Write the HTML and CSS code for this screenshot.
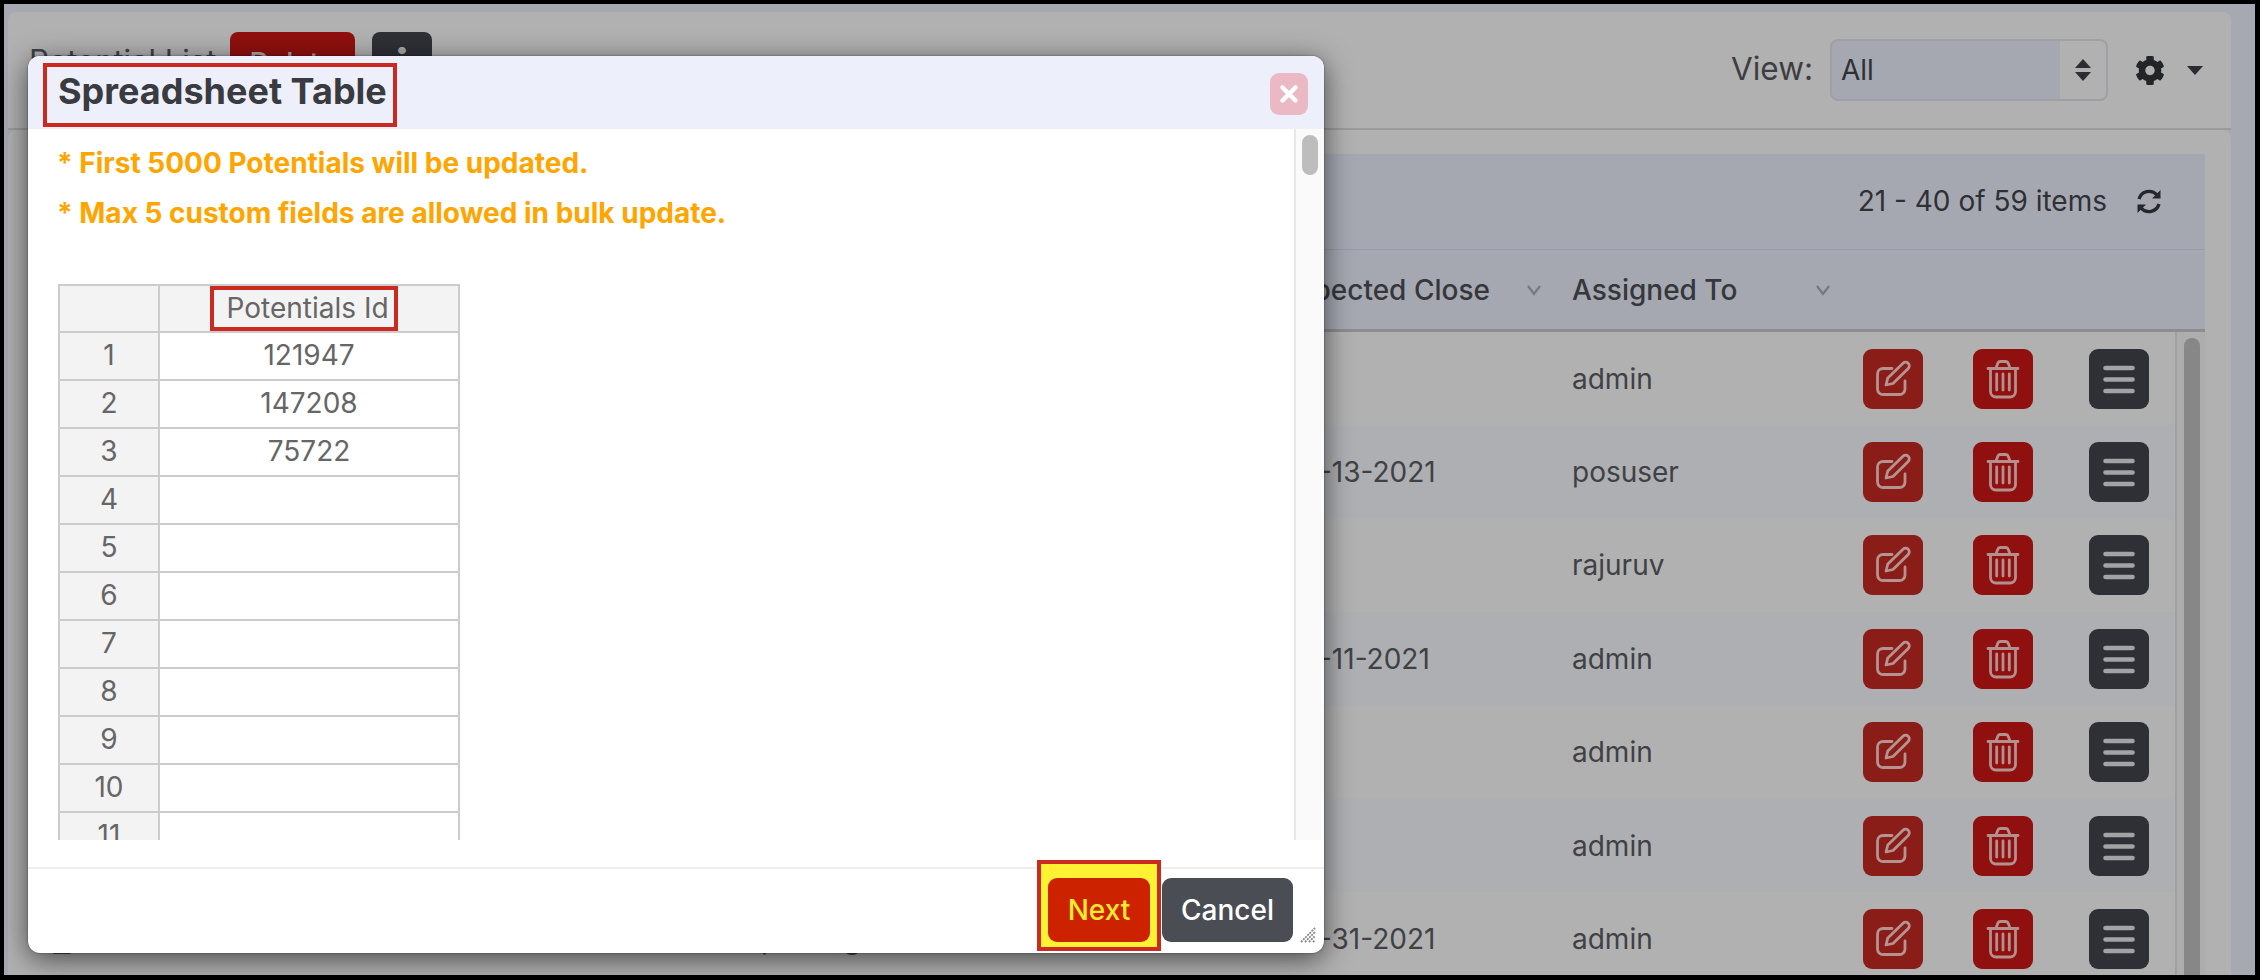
FILE: index.html
```html
<!DOCTYPE html>
<html lang="en">
<head>
<meta charset="utf-8">
<title>Spreadsheet Table</title>
<link rel="stylesheet" href="styles.css">
</head>
<body>
<svg class="defs" width="0" height="0" aria-hidden="true">
  <symbol id="i-edit" viewBox="0 0 60 60"><path d="M29 19.500H20a5.500 5.500 0 0 0-5.500 5.500v15a5.500 5.500 0 0 0 5.500 5.500h16.500a5.500 5.500 0 0 0 5.500-5.500V32" fill="none" stroke="currentColor" stroke-width="2.800" stroke-linecap="round"/><path d="M23 36l1.800-7L40 14.200a3.600 3.600 0 0 1 5.200 5.200L30 34.500z" fill="none" stroke="currentColor" stroke-width="2.800" stroke-linejoin="round"/></symbol>
  <symbol id="i-trash" viewBox="0 0 60 60"><path d="M15 19.500H45M23 19l1.800-4.800a2.500 2.500 0 0 1 2.300-1.700h5.800a2.500 2.500 0 0 1 2.300 1.700L37 19M17.500 20v22.500a5.500 5.500 0 0 0 5.500 5.500h14a5.500 5.500 0 0 0 5.500-5.500V20M23.700 25V41M30 25V41M36.300 25V41" fill="none" stroke="currentColor" stroke-width="2.800" stroke-linecap="round" stroke-linejoin="round"/></symbol>
  <symbol id="i-menu" viewBox="0 0 60 60"><path d="M16.500 19H43.500M16.500 30.500H43.500M16.500 42H43.500" fill="none" stroke="currentColor" stroke-width="4.600" stroke-linecap="round"/></symbol>
  <symbol id="i-chev" viewBox="0 0 16 12"><path d="M2 2l6 8 6-8" fill="none" stroke="currentColor" stroke-width="2.200"/></symbol>
</svg>

<div class="frame">
  <header class="topbar">
    <div class="top-left">
      <span class="page-title">Potential List</span>
      <button class="top-btn top-delete">Delete</button>
      <button class="top-btn top-info">i</button>
    </div>
    <div class="top-right">
      <span class="view-label">View:</span>
      <div class="view-select">
        <span class="view-value">All</span>
        <span class="view-arrows"><i class="up"></i><i class="down"></i></span>
      </div>
      <svg class="gear" viewBox="0 0 512 512"><path d="M487.400 315.700l-42.600-24.600c4.300-23.200 4.300-47 0-70.200l42.600-24.600c4.900-2.800 7.100-8.600 5.500-14-11.100-35.600-30-67.800-54.700-94.600-3.800-4.100-10-5.100-14.800-2.300L380.800 110c-17.900-15.400-38.500-27.300-60.800-35.100V25.800c0-5.600-3.900-10.500-9.400-11.700-36.700-8.200-74.300-7.800-109.200 0-5.500 1.200-9.400 6.100-9.400 11.700V75c-22.200 7.900-42.800 19.800-60.800 35.100L88.700 85.500c-4.900-2.800-11-1.900-14.800 2.300-24.700 26.700-43.600 58.900-54.700 94.600-1.700 5.400.6 11.200 5.500 14L67.300 221c-4.300 23.200-4.300 47 0 70.200l-42.600 24.600c-4.900 2.800-7.100 8.600-5.500 14 11.100 35.600 30 67.800 54.700 94.600 3.800 4.100 10 5.100 14.800 2.300l42.600-24.600c17.900 15.400 38.500 27.300 60.800 35.100v49.200c0 5.600 3.900 10.500 9.400 11.700 36.700 8.200 74.300 7.800 109.200 0 5.500-1.200 9.400-6.100 9.400-11.700v-49.200c22.200-7.900 42.800-19.800 60.800-35.100l42.600 24.600c4.900 2.800 11 1.900 14.800-2.300 24.700-26.700 43.600-58.900 54.700-94.600 1.500-5.500-.7-11.300-5.600-14.100zM256 336c-44.100 0-80-35.900-80-80s35.900-80 80-80 80 35.900 80 80-35.900 80-80 80z" fill="currentColor"/></svg>
      <i class="caret"></i>
    </div>
  </header>

  <main class="listcard">
    <div class="band">
      <span class="count">21 - 40 of 59 items</span>
      <svg class="refresh" viewBox="0 0 28 28"><path d="M4 11.500A10.500 10.500 0 0 1 22 7.500M24 16.500A10.500 10.500 0 0 1 6 20.500" fill="none" stroke="currentColor" stroke-width="3.400"/><path d="M25.500 2.500V11h-8.500zM2.500 25.500V17h8.500z" fill="currentColor"/></svg>
    </div>
    <div class="thead">
      <div class="th th-close">Expected Close<svg class="chev"><use href="#i-chev"/></svg></div>
      <div class="th th-assign">Assigned To<svg class="chev"><use href="#i-chev"/></svg></div>
    </div>
    <div class="tbody-wrap">
      <div class="rows">
        <div class="row"><span class="check"></span><span></span><span></span><span>admin</span><button class="act act-edit"><svg><use href="#i-edit"/></svg></button><button class="act act-del"><svg><use href="#i-trash"/></svg></button><button class="act act-menu"><svg><use href="#i-menu"/></svg></button></div>
        <div class="row alt"><span class="check"></span><span></span><span>08-13-2021</span><span>posuser</span><button class="act act-edit"><svg><use href="#i-edit"/></svg></button><button class="act act-del"><svg><use href="#i-trash"/></svg></button><button class="act act-menu"><svg><use href="#i-menu"/></svg></button></div>
        <div class="row"><span class="check"></span><span></span><span></span><span>rajuruv</span><button class="act act-edit"><svg><use href="#i-edit"/></svg></button><button class="act act-del"><svg><use href="#i-trash"/></svg></button><button class="act act-menu"><svg><use href="#i-menu"/></svg></button></div>
        <div class="row alt"><span class="check"></span><span></span><span>08-11-2021</span><span>admin</span><button class="act act-edit"><svg><use href="#i-edit"/></svg></button><button class="act act-del"><svg><use href="#i-trash"/></svg></button><button class="act act-menu"><svg><use href="#i-menu"/></svg></button></div>
        <div class="row"><span class="check"></span><span></span><span></span><span>admin</span><button class="act act-edit"><svg><use href="#i-edit"/></svg></button><button class="act act-del"><svg><use href="#i-trash"/></svg></button><button class="act act-menu"><svg><use href="#i-menu"/></svg></button></div>
        <div class="row alt"><span class="check"></span><span></span><span></span><span>admin</span><button class="act act-edit"><svg><use href="#i-edit"/></svg></button><button class="act act-del"><svg><use href="#i-trash"/></svg></button><button class="act act-menu"><svg><use href="#i-menu"/></svg></button></div>
        <div class="row"><span class="check"></span><span class="name">parking</span><span>03-31-2021</span><span>admin</span><button class="act act-edit"><svg><use href="#i-edit"/></svg></button><button class="act act-del"><svg><use href="#i-trash"/></svg></button><button class="act act-menu"><svg><use href="#i-menu"/></svg></button></div>
      </div>
      <div class="list-scroll"><div class="list-thumb"></div></div>
    </div>
  </main>
</div>

<section class="modal">
  <div class="modal-head">
    <h1 class="modal-title">Spreadsheet Table</h1>
    <button class="modal-close" aria-label="Close"><svg viewBox="0 0 38 42"><path d="M12.500 14.500L25.500 27.500M25.500 14.500L12.500 27.500" fill="none" stroke="#fff" stroke-width="4.500" stroke-linecap="round"/></svg></button>
  </div>
  <div class="modal-body">
    <div class="modal-content">
      <p class="warn">* First 5000 Potentials will be updated.</p>
      <p class="warn">* Max 5 custom fields are allowed in bulk update.</p>
      <table class="sheet">
        <thead><tr><th class="corner"></th><th class="col"><span class="mark">Potentials Id</span></th></tr></thead>
        <tbody>
          <tr><th>1</th><td>121947</td></tr>
          <tr><th>2</th><td>147208</td></tr>
          <tr><th>3</th><td>75722</td></tr>
          <tr><th>4</th><td></td></tr>
          <tr><th>5</th><td></td></tr>
          <tr><th>6</th><td></td></tr>
          <tr><th>7</th><td></td></tr>
          <tr><th>8</th><td></td></tr>
          <tr><th>9</th><td></td></tr>
          <tr><th>10</th><td></td></tr>
          <tr><th>11</th><td></td></tr>
        </tbody>
      </table>
    </div>
    <div class="modal-scroll"><div class="modal-thumb"></div></div>
  </div>
  <div class="modal-foot">
    <div class="next-mark"><button class="btn btn-next">Next</button></div>
    <button class="btn btn-cancel">Cancel</button>
  </div>
  <svg class="grip" viewBox="0 0 16 16"><path d="M1 15L15 1M5 15L15 5M9 15L15 9M13 15L15 13" stroke="#8a8a8a" stroke-width="1.800" stroke-dasharray="2 1" fill="none"/></svg>
</section>
</body>
</html>
```
FILE: styles.css
```css
* { box-sizing: border-box; }
html, body { margin: 0; height: 100%; }
body {
  background: #000;
  padding: 4px 5px 5px 4px;
  font-family: Inter, "Liberation Sans", sans-serif;
  font-size: 28px;
  color: #3d3e41;
  overflow: hidden;
  position: relative;
}
.defs { position: absolute; }
button { font-family: inherit; border: 0; padding: 0; }

.frame {
  height: 971px;
  background: #a6a9b2;
  padding: 8px 24px 0 4px;
  overflow: hidden;
}

.topbar {
  height: 118px;
  background: #b1b1b1;
  border-bottom: 2px solid #9b9b9c;
  border-radius: 8px 8px 0 0;
  display: flex;
  align-items: center;
  justify-content: space-between;
  padding: 0 28px 0 21px;
}
.top-left { display: flex; align-items: center; margin-bottom: 10px; }
.page-title { font-size: 31px; width: 201px; color: #404145; margin-bottom: 10px; white-space: nowrap; }
.top-btn { height: 66px; border-radius: 8px; color: #a9a9a9; font-size: 28px; font-weight: 500; }
.top-delete { width: 125px; background: #8f100e; margin-right: 17px; padding-bottom: 4px; }
.top-info { width: 60px; background: #2e3036; font-weight: 800; font-size: 44px; padding-bottom: 2px; line-height: 66px; }
.top-right { display: flex; align-items: center; color: #3d3e41; }
.view-label { font-size: 31.500px; margin-right: 17px; margin-bottom: 3px; }
.view-select {
  width: 278px;
  height: 62px;
  display: flex;
  background: #a5a8b1;
  border: 2px solid #9f9fa4;
  border-radius: 8px;
  overflow: hidden;
}
.view-value { flex: 1; align-self: center; padding-left: 9px; font-size: 28px; color: #2f3034; }
.view-arrows {
  width: 46px;
  background: #b1b1b1;
  display: flex;
  flex-direction: column;
  align-items: center;
  justify-content: center;
  gap: 4px;
}
.view-arrows i { width: 0; height: 0; border-left: 8px solid transparent; border-right: 8px solid transparent; }
.view-arrows .up { border-bottom: 9px solid #2d2e33; }
.view-arrows .down { border-top: 9px solid #2d2e33; }
.gear { width: 30px; height: 31px; margin-left: 27px; color: #232428; }
.caret {
  width: 0; height: 0;
  margin-left: 22px;
  border-left: 8px solid transparent;
  border-right: 8px solid transparent;
  border-top: 9px solid #2a2b30;
}

.listcard {
  height: 845px;
  background: #b1b1b1;
  border-radius: 8px 8px 0 0;
  padding: 24px 26px 0 21px;
}
.band {
  height: 96px;
  background: #a5a8b1;
  border-bottom: 1px solid #979bb0;
  display: flex;
  align-items: center;
  justify-content: flex-end;
  padding-right: 42px;
  font-size: 28px;
  color: #2f3034;
}
.count { margin-bottom: 2px; }
.refresh { width: 28px; height: 29px; margin-left: 28px; color: #26272b; }
.thead {
  height: 82px;
  background: #a5a8b1;
  border-bottom: 3px solid #8c8d91;
  display: flex;
  align-items: center;
  padding-left: 1252px;
  font-weight: 500;
  color: #36373b;
}
.th { display: flex; align-items: center; }
.th-close { width: 291px; padding-right: 30px; justify-content: space-between; }
.th-assign { width: 291px; padding-right: 32px; justify-content: space-between; }
.chev { width: 16px; height: 12px; color: #77787c; flex: none; }

.tbody-wrap { display: flex; height: 700px; }
.rows { flex: 1; border-right: 2px solid #a0a0a1; }
.row {
  height: 93.400px;
  display: grid;
  grid-template-columns: 43px 1212px 288px 291px 110px 116px 60px;
  align-items: center;
  background: #b1b1b1;
  color: #404145;
}
.row.alt { background: #aeafb2; }
.check { justify-self: end; width: 20px; height: 30px; background: #a9aab0; border: 2px solid #4a4a4d; border-radius: 3px; }
.name { padding-left: 689px; }
.act { width: 60px; height: 60px; border-radius: 9px; display: flex; }
.act svg { width: 60px; height: 60px; }
.act-edit { background: #8a1d17; color: #b59391; }
.act-del { background: #8f100e; color: #b3908f; }
.act-menu { background: #2e3036; color: #a2a3a7; }
.list-scroll { width: 28px; padding: 6px 5px 0 7px; background: #adadad; }
.list-thumb { height: 100%; background: #878787; border-radius: 8px; }

.modal {
  position: absolute;
  left: 28px;
  top: 56px;
  width: 1296px;
  height: 897px;
  background: #fff;
  border-radius: 12px;
  box-shadow: 0 6px 28px rgba(0, 0, 0, .6), 0 0 2px rgba(0, 0, 0, .5);
  display: flex;
  flex-direction: column;
  overflow: hidden;
}
.modal-head {
  height: 73px;
  flex: none;
  background: #edeffb;
  display: flex;
  align-items: flex-start;
  justify-content: space-between;
  padding: 7px 16px 0 15px;
}
.modal-title {
  margin: 0;
  height: 64px;
  width: 354px;
  border: 4px solid #cb2a20;
  font-size: 36px;
  font-weight: 700;
  line-height: 48px;
  padding-left: 11px;
  color: #3a3b40;
  white-space: nowrap;
}
.modal-close {
  width: 38px;
  height: 42px;
  margin-top: 10px;
  background: #ebb9c4;
  border-radius: 9px;
  display: flex;
}
.modal-close svg { width: 38px; height: 42px; }
.modal-body { height: 711px; flex: none; display: flex; }
.modal-content { flex: 1; padding: 20px 0 0 30px; overflow: hidden; }
.warn {
  margin: 0 0 22px -1px;
  height: 28px;
  line-height: 28px;
  font-size: 28px;
  font-weight: 700;
  color: #ffa500;
}
.sheet {
  margin-top: 57px;
  border-collapse: collapse;
  table-layout: fixed;
  width: 400px;
  font-size: 28px;
  color: #666;
}
.sheet th, .sheet td {
  height: 48px;
  padding: 0 0 3px;
  border: 2px solid #ccc;
  text-align: center;
  font-weight: 400;
}
.sheet th { background: #f3f3f3; }
.sheet thead th { height: 47px; padding: 0; vertical-align: top; }
.sheet .corner { width: 100px; }
.sheet .col { width: 300px; }
.sheet .mark {
  display: inline-block;
  width: 188px;
  height: 45px;
  line-height: 36px;
  border: 4px solid #cb2a20;
  margin: 0 11px 0 0;
  padding-left: 13px;
  text-align: left;
  white-space: nowrap;
}
.modal-scroll {
  width: 30px;
  background: #fafafa;
  border-left: 2px solid #e8e8e8;
  padding: 6px 6px 0 6px;
}
.modal-thumb { height: 40px; background: #bdbdbd; border-radius: 8px; }

.modal-foot {
  margin-top: 27px;
  border-top: 2px solid #eee;
  flex: 1;
  display: flex;
  justify-content: flex-end;
  align-items: flex-start;
  padding: 9px 31px 0 0;
}
.next-mark {
  margin: -18px 1px 0 0;
  padding: 14px 7px 5px 7px;
  background: #fff233;
  border: 4px solid #cb2a20;
  display: flex;
}
.btn { height: 64px; border-radius: 9px; font-size: 28px; font-weight: 500; }
.btn-next { width: 102px; background: #cd2200; color: #ffeb2e; }
.btn-cancel { width: 131px; background: #4b4d55; color: #fff; }
.grip { position: absolute; right: 8px; bottom: 10px; width: 16px; height: 16px; }
```
